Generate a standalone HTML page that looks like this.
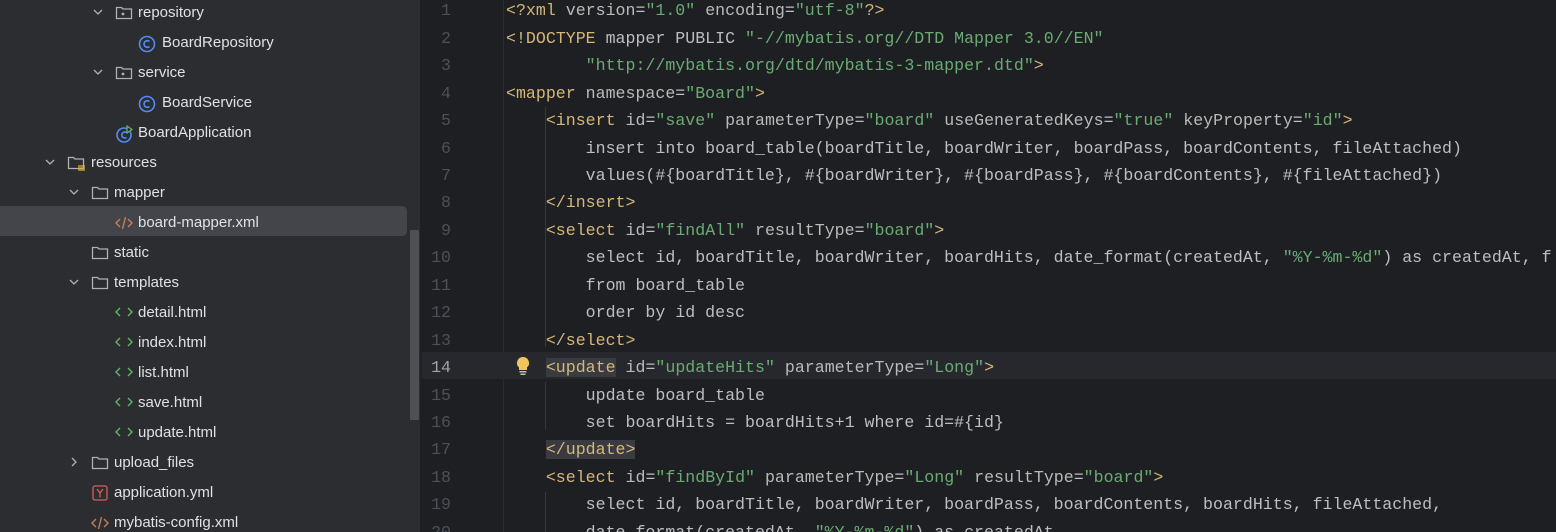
<!DOCTYPE html>
<html><head><meta charset="utf-8"><style>
*{margin:0;padding:0;box-sizing:border-box}
html,body{overflow:hidden}
body{width:1556px;height:532px;overflow:hidden;background:#1e1f22;position:relative;font-family:"Liberation Sans",sans-serif}
#side{position:absolute;left:0;top:0;width:421px;height:532px;background:#2b2d30;border-right:1px solid #1e1f22;overflow:hidden}
.r{position:absolute;left:0;height:30px;width:407px;color:#dfe1e5;font-size:15px;line-height:30px;white-space:nowrap}
.r.sel{background:#43454a;border-radius:0 5px 5px 0}
.r span,.r svg{position:absolute}
.r svg{top:7px}
#sb{position:absolute;left:410px;top:230px;width:9px;height:190px;background:#4e5054;border-radius:1px}
#ed{position:absolute;left:422px;top:0;width:1134px;height:532px;background:#1e1f22;overflow:hidden}
.l{position:absolute;left:0;width:1134px;height:27.44px;line-height:27.44px;font-family:"Liberation Mono",monospace;font-size:16.6px;color:#bcbec4;white-space:pre;overflow:hidden}
.l .n{position:absolute;right:1105px;color:#4b5059;text-align:right}
.l .c{position:absolute;left:84px}
.cur{background:#26282e}
.cur .n{color:#a1a3ab}
.t{color:#d5b778}.a{color:#bababa}.v{color:#6aab73}
.hl{background:#393b40}
.g{position:absolute;width:1px;background:#36383c}
</style></head><body>
<div id="side">
<div class="r" style="top:-2px"><svg style="left:91px" width="14" height="14" viewBox="0 0 14 14"><path d="M3 5l4 4 4-4" stroke="#aeb1b6" fill="none" stroke-width="1.3"/></svg><svg style="left:115px" width="18" height="16" viewBox="0 0 18 16"><path d="M1.5 2.5h5l1.5 1.5h8.5v9.5h-15z" fill="none" stroke="#aeb1b6" stroke-width="1.3"/><circle cx="8" cy="9" r="1.4" fill="#aeb1b6"/></svg><span style="left:138px">repository</span></div>
<div class="r" style="top:28px"><svg style="left:138px" width="18" height="18" viewBox="0 0 18 18"><circle cx="9" cy="9" r="7.5" fill="none" stroke="#548af7" stroke-width="1.6"/><path d="M11.5 6.5a3.3 3.3 0 1 0 0 5" fill="none" stroke="#548af7" stroke-width="1.6"/></svg><span style="left:162px">BoardRepository</span></div>
<div class="r" style="top:58px"><svg style="left:91px" width="14" height="14" viewBox="0 0 14 14"><path d="M3 5l4 4 4-4" stroke="#aeb1b6" fill="none" stroke-width="1.3"/></svg><svg style="left:115px" width="18" height="16" viewBox="0 0 18 16"><path d="M1.5 2.5h5l1.5 1.5h8.5v9.5h-15z" fill="none" stroke="#aeb1b6" stroke-width="1.3"/><circle cx="8" cy="9" r="1.4" fill="#aeb1b6"/></svg><span style="left:138px">service</span></div>
<div class="r" style="top:88px"><svg style="left:138px" width="18" height="18" viewBox="0 0 18 18"><circle cx="9" cy="9" r="7.5" fill="none" stroke="#548af7" stroke-width="1.6"/><path d="M11.5 6.5a3.3 3.3 0 1 0 0 5" fill="none" stroke="#548af7" stroke-width="1.6"/></svg><span style="left:162px">BoardService</span></div>
<div class="r" style="top:118px"><svg style="left:115px" width="20" height="18" viewBox="0 0 20 18"><circle cx="9" cy="10" r="7" fill="none" stroke="#548af7" stroke-width="1.6"/><path d="M11.5 7.5a3 3 0 1 0 0 5" fill="none" stroke="#548af7" stroke-width="1.6"/><path d="M12 1v7l5-3.5z" fill="#2b2d30" stroke="#5fb865" stroke-width="1.2"/></svg><span style="left:138px">BoardApplication</span></div>
<div class="r" style="top:148px"><svg style="left:43px" width="14" height="14" viewBox="0 0 14 14"><path d="M3 5l4 4 4-4" stroke="#aeb1b6" fill="none" stroke-width="1.3"/></svg><svg style="left:67px" width="20" height="17" viewBox="0 0 20 17"><path d="M1.5 2.5h5l1.5 1.5h8.5v9.5h-15z" fill="none" stroke="#aeb1b6" stroke-width="1.3"/><path d="M11 11h7M11 13h7M11 15h7" stroke="#e0b03c" stroke-width="1.2"/></svg><span style="left:91px">resources</span></div>
<div class="r" style="top:178px"><svg style="left:67px" width="14" height="14" viewBox="0 0 14 14"><path d="M3 5l4 4 4-4" stroke="#aeb1b6" fill="none" stroke-width="1.3"/></svg><svg style="left:91px" width="18" height="16" viewBox="0 0 18 16"><path d="M1.5 2.5h5l1.5 1.5h8.5v9.5h-15z" fill="none" stroke="#aeb1b6" stroke-width="1.3"/></svg><span style="left:114px">mapper</span></div>
<div class="r sel" style="top:206px;height:30px;line-height:34px"><svg style="left:114px;top:9px" width="20" height="16" viewBox="0 0 20 16"><path d="M6 4L2 8l4 4M14 4l4 4-4 4M11.5 2L8.5 14" fill="none" stroke="#c77d55" stroke-width="1.4"/></svg><span style="left:138px">board-mapper.xml</span></div>
<div class="r" style="top:238px"><svg style="left:91px" width="18" height="16" viewBox="0 0 18 16"><path d="M1.5 2.5h5l1.5 1.5h8.5v9.5h-15z" fill="none" stroke="#aeb1b6" stroke-width="1.3"/></svg><span style="left:114px">static</span></div>
<div class="r" style="top:268px"><svg style="left:67px" width="14" height="14" viewBox="0 0 14 14"><path d="M3 5l4 4 4-4" stroke="#aeb1b6" fill="none" stroke-width="1.3"/></svg><svg style="left:91px" width="18" height="16" viewBox="0 0 18 16"><path d="M1.5 2.5h5l1.5 1.5h8.5v9.5h-15z" fill="none" stroke="#aeb1b6" stroke-width="1.3"/></svg><span style="left:114px">templates</span></div>
<div class="r" style="top:298px"><svg style="left:114px" width="20" height="14" viewBox="0 0 20 14"><path d="M6 3L2 7l4 4M14 3l4 4-4 4" fill="none" stroke="#5fb865" stroke-width="1.4"/></svg><span style="left:138px">detail.html</span></div>
<div class="r" style="top:328px"><svg style="left:114px" width="20" height="14" viewBox="0 0 20 14"><path d="M6 3L2 7l4 4M14 3l4 4-4 4" fill="none" stroke="#5fb865" stroke-width="1.4"/></svg><span style="left:138px">index.html</span></div>
<div class="r" style="top:358px"><svg style="left:114px" width="20" height="14" viewBox="0 0 20 14"><path d="M6 3L2 7l4 4M14 3l4 4-4 4" fill="none" stroke="#5fb865" stroke-width="1.4"/></svg><span style="left:138px">list.html</span></div>
<div class="r" style="top:388px"><svg style="left:114px" width="20" height="14" viewBox="0 0 20 14"><path d="M6 3L2 7l4 4M14 3l4 4-4 4" fill="none" stroke="#5fb865" stroke-width="1.4"/></svg><span style="left:138px">save.html</span></div>
<div class="r" style="top:418px"><svg style="left:114px" width="20" height="14" viewBox="0 0 20 14"><path d="M6 3L2 7l4 4M14 3l4 4-4 4" fill="none" stroke="#5fb865" stroke-width="1.4"/></svg><span style="left:138px">update.html</span></div>
<div class="r" style="top:448px"><svg style="left:67px" width="14" height="14" viewBox="0 0 14 14"><path d="M5 3l4 4-4 4" stroke="#aeb1b6" fill="none" stroke-width="1.3"/></svg><svg style="left:91px" width="18" height="16" viewBox="0 0 18 16"><path d="M1.5 2.5h5l1.5 1.5h8.5v9.5h-15z" fill="none" stroke="#aeb1b6" stroke-width="1.3"/></svg><span style="left:114px">upload_files</span></div>
<div class="r" style="top:478px"><svg style="left:92px" width="16" height="16" viewBox="0 0 16 16"><rect x="1" y="1" width="14" height="14" rx="2" fill="none" stroke="#db5c5c" stroke-width="1.3"/><path d="M5 4l3 4 3-4M8 8v4.5" fill="none" stroke="#db5c5c" stroke-width="1.3"/></svg><span style="left:114px">application.yml</span></div>
<div class="r" style="top:508px"><svg style="left:90px" width="20" height="16" viewBox="0 0 20 16"><path d="M6 4L2 8l4 4M14 4l4 4-4 4M11.5 2L8.5 14" fill="none" stroke="#c77d55" stroke-width="1.4"/></svg><span style="left:114px">mybatis-config.xml</span></div>
<div id="sb"></div>
</div>
<div id="ed">
<div class="g" style="left:81px;top:0;height:532px;background:#2b2d30"></div>
<div class="g" style="left:123px;top:107px;height:240px"></div>
<div class="g" style="left:123px;top:382px;height:48px"></div>
<div class="g" style="left:123px;top:492px;height:40px"></div>
<div class="l" style="top:-2.7px"><span class="n">1</span><span class="c"><span class="t">&lt;?xml </span><span class="a">version</span>=<span class="v">"1.0"</span> <span class="a">encoding</span>=<span class="v">"utf-8"</span><span class="t">?&gt;</span></span></div>
<div class="l" style="top:24.7px"><span class="n">2</span><span class="c"><span class="t">&lt;!DOCTYPE </span>mapper PUBLIC <span class="v">"-//mybatis.org//DTD Mapper 3.0//EN"</span></span></div>
<div class="l" style="top:52.2px"><span class="n">3</span><span class="c">        <span class="v">"http://mybatis.org/dtd/mybatis-3-mapper.dtd"</span><span class="t">&gt;</span></span></div>
<div class="l" style="top:79.6px"><span class="n">4</span><span class="c"><span class="t">&lt;mapper </span><span class="a">namespace</span>=<span class="v">"Board"</span><span class="t">&gt;</span></span></div>
<div class="l" style="top:107px"><span class="n">5</span><span class="c">    <span class="t">&lt;insert </span><span class="a">id</span>=<span class="v">"save"</span> <span class="a">parameterType</span>=<span class="v">"board"</span> <span class="a">useGeneratedKeys</span>=<span class="v">"true"</span> <span class="a">keyProperty</span>=<span class="v">"id"</span><span class="t">&gt;</span></span></div>
<div class="l" style="top:134.5px"><span class="n">6</span><span class="c">        insert into board_table(boardTitle, boardWriter, boardPass, boardContents, fileAttached)</span></div>
<div class="l" style="top:161.9px"><span class="n">7</span><span class="c">        values(#{boardTitle}, #{boardWriter}, #{boardPass}, #{boardContents}, #{fileAttached})</span></div>
<div class="l" style="top:189.4px"><span class="n">8</span><span class="c">    <span class="t">&lt;/insert&gt;</span></span></div>
<div class="l" style="top:216.8px"><span class="n">9</span><span class="c">    <span class="t">&lt;select </span><span class="a">id</span>=<span class="v">"findAll"</span> <span class="a">resultType</span>=<span class="v">"board"</span><span class="t">&gt;</span></span></div>
<div class="l" style="top:244.3px"><span class="n">10</span><span class="c">        select id, boardTitle, boardWriter, boardHits, date_format(createdAt, <span class="v">"%Y-%m-%d"</span>) as createdAt, f</span></div>
<div class="l" style="top:271.7px"><span class="n">11</span><span class="c">        from board_table</span></div>
<div class="l" style="top:299.1px"><span class="n">12</span><span class="c">        order by id desc</span></div>
<div class="l" style="top:326.6px"><span class="n">13</span><span class="c">    <span class="t">&lt;/select&gt;</span></span></div>
<div class="l cur" style="top:352px;height:27.44px"><span class="n" style="top:2px">14</span><svg style="position:absolute;left:92px;top:4px" width="18" height="20" viewBox="0 0 18 20"><path d="M9 1a6 6 0 0 0-4 10.5V14h8v-2.5A6 6 0 0 0 9 1z" fill="#f2c55c"/><rect x="5.5" y="15" width="7" height="1.5" fill="#bcbec4"/><rect x="6.5" y="17.5" width="5" height="1.5" fill="#bcbec4"/></svg><span class="c" style="top:2px">    <span class="t hl">&lt;update</span> <span class="a">id</span>=<span class="v">"updateHits"</span> <span class="a">parameterType</span>=<span class="v">"Long"</span><span class="t">&gt;</span></span></div>
<div class="l" style="top:381.5px"><span class="n">15</span><span class="c">        update board_table</span></div>
<div class="l" style="top:408.9px"><span class="n">16</span><span class="c">        set boardHits = boardHits+1 where id=#{id}</span></div>
<div class="l" style="top:436.4px"><span class="n">17</span><span class="c">    <span class="t hl">&lt;/update&gt;</span></span></div>
<div class="l" style="top:463.8px"><span class="n">18</span><span class="c">    <span class="t">&lt;select </span><span class="a">id</span>=<span class="v">"findById"</span> <span class="a">parameterType</span>=<span class="v">"Long"</span> <span class="a">resultType</span>=<span class="v">"board"</span><span class="t">&gt;</span></span></div>
<div class="l" style="top:491.2px"><span class="n">19</span><span class="c">        select id, boardTitle, boardWriter, boardPass, boardContents, boardHits, fileAttached,</span></div>
<div class="l" style="top:518.7px"><span class="n">20</span><span class="c">        date_format(createdAt, <span class="v">"%Y-%m-%d"</span>) as createdAt</span></div>
</div>
</body></html>
